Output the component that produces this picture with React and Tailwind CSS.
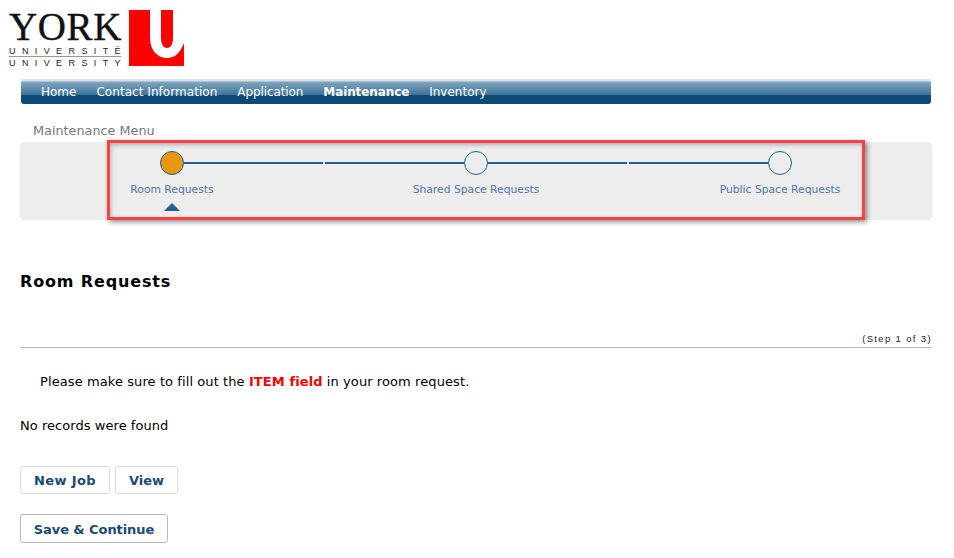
import React from "react";

const NAV = ["Home", "Contact Information", "Application", "Maintenance", "Inventory"];
const STEPS = ["Room Requests", "Shared Space Requests", "Public Space Requests"];

function navClass(n) {
  if (n === "Maintenance") return "px-[10px] text-[12px] tracking-[-0.1px] text-white font-bold";
  if (n === "Contact Information") return "px-[10px] text-[12px] tracking-[0.05px] text-white";
  if (n === "Application") return "px-[10px] text-[12px] tracking-[-0.1px] text-white";
  return "px-[10px] text-[12px] text-white";
}

function YorkLogo() {
  return (
    <div className="flex items-start gap-[8px] h-[56px]">
      <div className="w-[112px] font-['Liberation_Sans',sans-serif] text-[#222]">
        <div className="h-[30px] mt-[2px] text-[39px] leading-[30px] tracking-[0.6px] text-[#111] [-webkit-text-stroke:0.4px_#111] font-['Liberation_Serif',serif] whitespace-nowrap">YORK</div>
        <div className="mt-[4px] h-[10px] mr-[-8px] text-[9px] leading-[10px] tracking-[6.4px] whitespace-nowrap">UNIVERSITÉ</div>
        <div className="h-px bg-[#999]"></div>
        <div className="mt-[1px] h-[10px] mr-[-8px] text-[9px] leading-[10px] tracking-[6.4px] whitespace-nowrap">UNIVERSITY</div>
      </div>
      <svg width="55" height="56" viewBox="0 0 55 56">
        <rect width="55" height="56" fill="#ff0000" />
        <path d="M21 0V28C21 41 29 48 38 48C46 48 51 43 55 33V0H44V28C44 35 41 38 38 38C35 38 32 35 32 28V0Z" fill="#fff" />
      </svg>
    </div>
  );
}

function Step({ label, index, total }) {
  const active = index === 0;
  return (
    <div className="flex flex-col items-center">
      <div className="w-full flex items-center h-[24px]">
        <div className={index === 0 ? "flex-1 ml-px" : "flex-1 h-[2px] bg-[#1f6196] ml-px"}></div>
        <div className={active ? "w-[24px] h-[24px] rounded-full border border-[#1f6196] bg-[#e8960f]" : "w-[24px] h-[24px] rounded-full border border-[#1f6196] bg-transparent"}></div>
        <div className={index === total - 1 ? "flex-1 mr-px" : "flex-1 h-[2px] bg-[#1f6196] mr-px"}></div>
      </div>
      <div className="mt-[8px] text-[10.75px] leading-[14px] text-[#4a76ad] whitespace-nowrap">{label}</div>
      {active && <div className="mt-[6px] w-0 h-0 border-x-[8px] border-x-transparent border-b-[8px] border-b-[#1f6196]"></div>}
    </div>
  );
}

function Btn({ children, className }) {
  return (
    <button className={"bg-white border rounded-[3px] text-[13px] font-bold text-[#1a4a75] " + className}>
      {children}
    </button>
  );
}

export default function App() {
  return (
    <div className="relative w-[954px] h-[558px] overflow-hidden bg-white font-['DejaVu_Sans',Verdana,sans-serif] text-[13px] text-black">
      <div className="pl-[9px] pt-[10px]">
        <YorkLogo />
      </div>

      <nav className="mx-[21px] mt-[13px] w-[910px] h-[25px] rounded-[3px] flex items-center pl-[10px] bg-[linear-gradient(#d5e0e8_0,#d5e0e8_2px,#7fa5c0_3px,#3d7399_16px,#0c4a75_16px,#0c4a75_100%)]">
        {NAV.map((n) => (
          <span key={n} className={navClass(n)}>{n}</span>
        ))}
      </nav>

      <div className="pl-[33px] mt-[20px] h-[14px] text-[12.8px] leading-[14px] text-[#777]">Maintenance Menu</div>

      <div className="ml-[20px] mt-[4px] w-[912px] h-[78px] rounded-[4px] bg-[#ededed] grid grid-cols-3 pt-[9px]">
        {STEPS.map((s, i) => <Step key={s} label={s} index={i} total={STEPS.length} />)}
      </div>

      <h1 className="ml-[20px] mt-[52px] text-[16px] leading-[20px] font-bold tracking-[0.85px]">Room Requests</h1>

      <div className="ml-[20px] w-[912px] mt-[41px] pb-[2px] border-b border-[#bbb] text-right font-['Liberation_Sans',sans-serif] text-[9.5px] leading-[12px] tracking-[1.35px] text-[#222]">(Step 1 of 3)</div>

      <p className="ml-[40px] mt-[26px] leading-[16px] tracking-[0.09px]">
        Please make sure to fill out the <b className="text-[#f00]">ITEM field</b> in your room request.
      </p>
      <p className="ml-[20px] mt-[28px] leading-[16px] tracking-[0.05px]">No records were found</p>

      <div className="ml-[20px] mt-[32px] flex gap-[5px]">
        <Btn className="w-[90px] h-[28px] pt-[1px] border-[#ddd] tracking-[0.4px]">New Job</Btn>
        <Btn className="w-[63px] h-[28px] pt-[1px] border-[#ddd]">View</Btn>
      </div>
      <div className="ml-[20px] mt-[20px]">
        <Btn className="w-[148px] h-[29px] pt-[2px] border-[#bbb] tracking-[-0.07px]">Save &amp; Continue</Btn>
      </div>

      {/* annotation box drawn over the stepper */}
      <div className="absolute left-[107px] top-[140px] w-[758px] h-[80px] border-[3px] border-[#f94144] shadow-[2px_2px_5px_rgba(0,0,0,0.45),inset_1px_2px_4px_rgba(0,0,0,0.25)]"></div>
    </div>
  );
}
